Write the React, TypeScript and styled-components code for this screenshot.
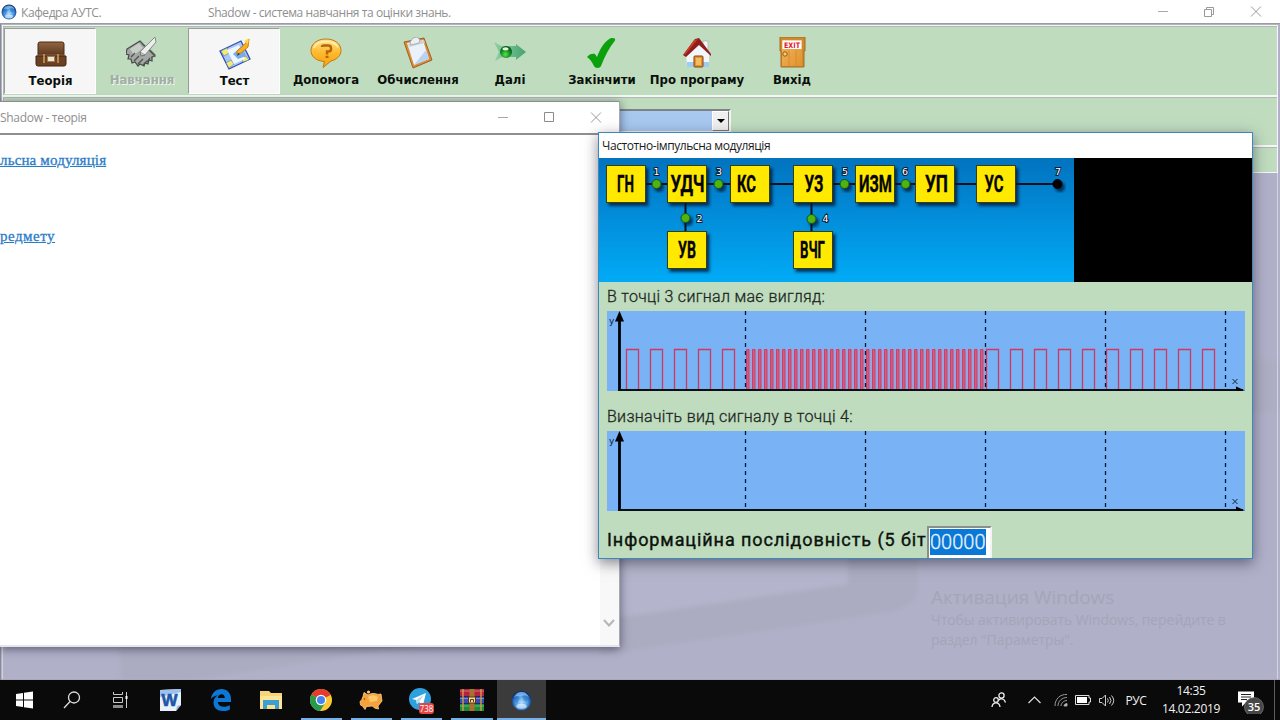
import React from 'react';
import styled, { createGlobalStyle, css } from 'styled-components';

const GREEN = '#bfdcbf';
const UI_FONT = '"Open Sans", "Noto Sans", sans-serif';

const GlobalStyle = createGlobalStyle`
  * { box-sizing: border-box; }
  body { margin: 0; background: #000; overflow: hidden; }
  svg { display: block; flex: none; }
`;

const Screen = styled.div`
  position: relative;
  display: flex;
  flex-direction: column;
  width: 1280px;
  height: 720px;
  overflow: hidden;
  font-family: ${UI_FONT};
`;

/* ---------- main window ---------- */

const TitleBar = styled.header`
  display: flex;
  align-items: center;
  flex: none;
  height: 24px;
  background: #fff;
  border-bottom: 1px solid #9c9c9c;
  color: #8f8f8f;
  font-size: 12px;
  line-height: 16px;
  letter-spacing: -0.42px;
  white-space: nowrap;
`;

const AppMark = styled.div`
  width: 21px;
  padding-left: 1px;
`;

const AppName = styled.span`
  width: 187px;
  padding-top: 2px;
`;

const AppCaption = styled.span`
  flex: 1;
  padding-top: 2px;
`;

const CaptionButtons = styled.div<{ $pad: number }>`
  display: flex;
  align-items: center;
  padding-right: ${(p) => p.$pad}px;
`;

const CaptionButton = styled.div`
  display: flex;
  justify-content: center;
  width: 46.5px;
`;

const Workspace = styled.main`
  position: relative;
  display: flex;
  flex-direction: column;
  flex: none;
  height: 657px;
  padding: 1px 2px 0 1px;
  background: #b0b0c9;
  border-left: 1px solid #8b8b93;
`;

const Backdrop = styled.svg`
  position: absolute;
  left: 0;
  top: 0;
`;

const Band = styled.div<{ $height: number }>`
  position: relative;
  display: flex;
  flex: none;
  height: ${(p) => p.$height}px;
  background: ${GREEN};
  border: 1px solid #f4f8f4;
  box-shadow: inset 0 1px 0 #b4b8b4, inset 1px 0 0 #b4b8b4, inset -1px 0 0 #cfd6cf;
`;

const ToolStrip = styled(Band)`
  padding: 2px 0 0 1px;
`;

const ToolButton = styled.div<{ $width: number; $pressed?: boolean; $disabled?: boolean }>`
  display: flex;
  flex-direction: column;
  align-items: center;
  flex: none;
  width: ${(p) => p.$width}px;
  height: 66px;
  padding-top: 9px;
  color: ${(p) => (p.$disabled ? '#a3aca5' : '#0a0f0a')};
  text-shadow: ${(p) => (p.$disabled ? '1px 1px 0 #eef5ee' : 'none')};
  font: bold 13px/16px 'DejaVu Sans Condensed', 'DejaVu Sans', sans-serif;
  white-space: nowrap;
  ${(p) =>
    p.$pressed &&
    css`
      background: #f6f6f6;
      border: 1px solid #fff;
      border-top-color: #9b9b9b;
      border-left-color: #9b9b9b;
      padding-left: 1px;
    `}
`;

const ToolIcon = styled.svg`
  width: 32px;
  height: 32px;
  margin-bottom: 3px;
`;

const SubjectBand = styled(Band)`
  padding-top: 12px;
`;

const Combo = styled.div`
  display: flex;
  justify-content: flex-end;
  width: 728px;
  height: 24px;
  background: #a8c8ef;
  border: 2px solid #7c8288;
  border-right-color: #f4f4f4;
  border-bottom-color: #f4f4f4;
`;

const ComboArrow = styled.div`
  display: flex;
  align-items: center;
  justify-content: center;
  width: 17px;
  background: #f0f0f0;
  border: 1px solid #fff;
  border-right-color: #77777b;
  border-bottom-color: #77777b;
`;

const Watermark = styled.div`
  position: absolute;
  left: 930px;
  top: 560px;
  color: #a4a5b7;
  font-size: 14px;
  line-height: 20px;
  letter-spacing: -0.08px;
  white-space: nowrap;
`;

const WatermarkTitle = styled.div`
  font-size: 19px;
  line-height: 26px;
`;

/* ---------- theory window ---------- */

const TheoryWindow = styled.section`
  position: absolute;
  left: 0;
  top: 101px;
  display: flex;
  flex-direction: column;
  width: 620px;
  height: 546px;
  background: #fff;
  border-top: 1px solid #8b8f8b;
  border-right: 1px solid #a9a9b2;
  border-bottom: 2px solid #e4e4ee;
  box-shadow: 0 2px 9px rgba(20, 20, 40, 0.55);
`;

const TheoryTitle = styled.div`
  display: flex;
  align-items: center;
  justify-content: space-between;
  height: 33px;
  border-bottom: 2px solid #8f8f8f;
  color: #8f8f8f;
  font-size: 12px;
  letter-spacing: -0.3px;
`;

const TheoryBody = styled.div`
  display: flex;
  flex: 1;
`;

const Links = styled.nav`
  display: flex;
  flex-direction: column;
  flex: 1;
  gap: 58px;
  padding-top: 16px;
`;

const TopicLink = styled.a<{ $spacing: number }>`
  color: #2a7cc9;
  font: 15px/18px 'Liberation Serif', serif;
  letter-spacing: ${(p) => p.$spacing}px;
  text-decoration: underline;
  -webkit-text-stroke: 0.3px #2a7cc9;
`;

const ScrollTrack = styled.div`
  display: flex;
  align-items: flex-end;
  justify-content: center;
  width: 19px;
  padding: 0 2px 17px 0;
  background: #f8f8f8;
`;

/* ---------- task window ---------- */

const TaskWindow = styled.section`
  position: absolute;
  left: 598px;
  top: 132px;
  display: flex;
  flex-direction: column;
  width: 655px;
  height: 427px;
  background: ${GREEN};
  border: 1px solid #3c88bd;
  box-shadow: 0 4px 13px rgba(20, 20, 40, 0.5);
`;

const TaskTitle = styled.div`
  flex: none;
  height: 25px;
  padding: 1px 0 0 3px;
  background: #fff;
  color: #1a1a1a;
  font-size: 12px;
  line-height: 24px;
  letter-spacing: -0.42px;
`;

const SchemeArea = styled.div`
  flex: none;
  height: 124px;
  background: #000;
`;

const Caption = styled.div`
  flex: none;
  height: 29px;
  padding-left: 8px;
  color: #1d261d;
  font: 300 16px/30px Roboto, sans-serif;
  letter-spacing: 0.3px;
  -webkit-text-stroke: 0.3px #1d261d;
`;

const ChartSlot = styled.div<{ $gap: number }>`
  flex: none;
  padding-left: 8px;
  margin-bottom: ${(p) => p.$gap}px;
`;

const AnswerRow = styled.div`
  display: flex;
  flex: 1;
  min-height: 0;
  padding-left: 8px;
  overflow: hidden;
`;

const AnswerLabel = styled.label`
  width: 320px;
  padding-top: 1px;
  color: #0b120b;
  font: 400 18px/26px Roboto, sans-serif;
  letter-spacing: 0.93px;
  white-space: nowrap;
  -webkit-text-stroke: 0.4px #0b120b;
`;

const AnswerField = styled.div`
  width: 65px;
  height: 34px;
  padding: 1px 0 0 1px;
  background: #fff;
  border: 2px solid #8a8f8a;
  border-right-color: #f4f4f4;
  border-bottom-color: #f4f4f4;
`;

const Selection = styled.span`
  display: block;
  width: 56px;
  height: 26px;
  background: #0a78d6;
  color: #e8f4ff;
  font: 300 20px/26px Roboto, sans-serif;
  -webkit-text-stroke: 0.3px #e8f4ff;
`;

/* ---------- taskbar ---------- */

const Taskbar = styled.footer`
  display: flex;
  flex: none;
  height: 40px;
  margin-top: -1px;
  position: relative;
  background: #0a0a0a;
  color: #f2f2f2;
  font-size: 12px;
`;

const TaskItem = styled.div<{ $width: number; $running?: boolean; $active?: boolean }>`
  position: relative;
  display: flex;
  align-items: center;
  justify-content: center;
  flex: none;
  width: ${(p) => p.$width}px;
  background: ${(p) => (p.$active ? '#3b3b3b' : 'transparent')};
  &::after {
    content: '';
    display: ${(p) => (p.$running ? 'block' : 'none')};
    position: absolute;
    left: ${(p) => (p.$active ? 0 : 5)}px;
    right: ${(p) => (p.$active ? 0 : 4)}px;
    bottom: 0;
    height: 2px;
    background: #76b2e8;
  }
`;

const Spacer = styled.div`
  flex: 1;
`;

const Tray = styled.div`
  display: flex;
  align-items: center;
  width: 296px;
`;

const TrayCell = styled.div<{ $width: number }>`
  display: flex;
  justify-content: center;
  flex: none;
  width: ${(p) => p.$width}px;
  letter-spacing: -0.4px;
`;

const Clock = styled.div`
  display: flex;
  flex-direction: column;
  align-items: center;
  flex: none;
  width: 64px;
  margin-right: 14px;
  line-height: 18px;
  letter-spacing: -0.3px;
`;

const ShowDesktop = styled.div`
  align-self: stretch;
  width: 1px;
  margin-left: auto;
  margin-right: 5px;
  background: #5c5c5c;
`;

/* ---------- shared drawings ---------- */

const MinimizeIcon = () => (
  <svg width="12" height="12" viewBox="0 0 12 12" stroke="#a8a8a8" fill="none"><path d="M1 5.500h10" /></svg>
);
const RestoreIcon = () => (
  <svg width="12" height="12" viewBox="0 0 12 12" stroke="#999" fill="none"><path d="M1.500 3.500h7v7h-7zM3.500 3.500v-2h7v7h-2" /></svg>
);
const MaximizeIcon = () => (
  <svg width="12" height="12" viewBox="0 0 12 12" stroke="#8c8c8c" fill="none"><path d="M1.500 .5h9v9h-9z" /></svg>
);
const CloseIcon = () => (
  <svg width="12" height="12" viewBox="0 0 12 12" stroke="#999" fill="none"><path d="M1 .5l10 10M11 .5L1 10.500" /></svg>
);

const Globe = ({ size }: { size: number }) => (
  <svg width={size} height={size} viewBox="0 0 20 20">
    <defs>
      <radialGradient id="globe" cx="50%" cy="60%" r="55%">
        <stop offset="0" stopColor="#b4defc" />
        <stop offset="0.5" stopColor="#5aa5e6" />
        <stop offset="0.8" stopColor="#2263b8" />
        <stop offset="1" stopColor="#0c2f6c" />
      </radialGradient>
    </defs>
    <circle cx="10" cy="10" r="9.300" fill="url(#globe)" />
    <path d="M3 7c2-4 4-5 7-5s5 1 7 5c-3-2-4-2-7-1s-4-1-7 1z" fill="#9bd2ff" opacity="0.65" />
    <path d="M5 6c2 0 4 1 3 3s-2 2-2 4c-2-1-3-4-1-7zM11 5l5 3-1 3-3-1z" fill="#2668bb" opacity="0.45" />
    <ellipse cx="10" cy="15.500" rx="5" ry="2.400" fill="#fff" opacity="0.55" />
  </svg>
);

const BriefcaseIcon = () => (
  <ToolIcon viewBox="0 0 32 32">
    <defs>
      <linearGradient id="leather" x1="0" y1="0" x2="0" y2="1">
        <stop offset="0" stopColor="#936642" /><stop offset="1" stopColor="#59341c" />
      </linearGradient>
    </defs>
    <path d="M3 6q0-2 2-2h22q2 0 2 2v12H3z" fill="url(#leather)" stroke="#4b2b15" />
    <path d="M1 18h30v8q0 2-2 2H3q-2 0-2-2z" fill="#6c4122" stroke="#43240f" />
    <path d="M3 17h26" stroke="#8f6340" />
    <path d="M9 16v9M23 16v9" stroke="#c79a5c" strokeWidth="1.600" />
    <rect x="12.500" y="18.500" width="7" height="5" fill="#eee4d2" stroke="#a57c50" />
  </ToolIcon>
);

const NotebookIcon = () => (
  <ToolIcon viewBox="0 0 32 32">
    <path d="M1 12L14 4l15 15-3 1 0 4-3-1-1 4-3-1-1 3-4-2-2 2-3-4-3 1-1-4-3 0 1-4-3-1z" fill="#a3a8a4" stroke="#454b47" strokeWidth="1.200" />
    <path d="M4 12l9-6 4 5-9 7z" fill="#c9cdca" />
    <path d="M5 20l4-4M8 24l5-5M12 27l5-5M17 28l4-4M21 25l3-4" stroke="#4d534f" strokeWidth="1.300" />
    <path d="M14 15L25 4l4-4 1 5-11 13z" fill="#eceeec" stroke="#858a86" />
    <path d="M14 15l1 4 4-1" fill="#bfc3c0" stroke="#5d625e" strokeWidth=".8" />
    <path d="M15 5l3 4M24 13l5 5-4 3" fill="none" stroke="#59605b" strokeWidth="1.200" />
  </ToolIcon>
);

const TestIcon = () => (
  <ToolIcon viewBox="0 0 32 32">
    <path d="M1 13L22 3l9 18-21 10z" fill="#a9c6f5" stroke="#304fae" strokeWidth="1.300" />
    <path d="M2 13l6-3 2 5-5 3zM22 20l5-2 3 4-6 2zM7 25l5-3 3 4-5 4z" fill="#f4ec6b" stroke="#5378cf" strokeWidth=".6" />
    <path d="M8 12l12-5 6 14-11 5z" fill="#eef6ff" />
    <path d="M14 16l9-8 4 10-8 3z" fill="#79abe8" />
    <path d="M18 13l6-5 6-7-1 8-7 6-4 1z" fill="#f5b024" stroke="#d0820b" />
    <path d="M25 3l5-3-1 6z" fill="#ffd84d" />
    <path d="M18 18l1-3 2 1z" fill="#25335f" />
  </ToolIcon>
);

const HelpIcon = () => (
  <ToolIcon viewBox="0 0 32 32">
    <defs>
      <linearGradient id="bubble" x1="0" y1="0" x2="0" y2="1">
        <stop offset="0" stopColor="#ffe28a" /><stop offset="0.5" stopColor="#ffb92a" /><stop offset="1" stopColor="#f7a010" />
      </linearGradient>
    </defs>
    <path d="M16 2c9 0 15 5 15 11.500 0 5-4 9-10 10.500l-8 6.500 1.500-6C6 24 1 19.500 1 13.500 1 7 7 2 16 2z" fill="url(#bubble)" stroke="#c07a10" />
    <path d="M4 11c2-5 7-6.500 12-6.500s10 2 12 6" fill="none" stroke="#fff0b8" strokeWidth="1.300" />
    <path d="M12 10q0-1.500 2-1.500h4q3 0 3 2.500v1.500q0 2-3 2h-1v3" fill="none" stroke="#b5650b" strokeWidth="2.400" />
    <rect x="15.500" y="18.800" width="3" height="2.200" fill="#b5650b" />
  </ToolIcon>
);

const ClipboardIcon = () => (
  <ToolIcon viewBox="0 0 32 32">
    <path d="M2 5L22 1l8 22-19 8z" fill="#d88b3c" stroke="#a45f1d" />
    <path d="M5 6l16-3 6 19-15 6z" fill="#e9f1fb" />
    <path d="M12 28L27 22l-3-9z" fill="#b9d2f0" />
    <path d="M6 7l16-4 1 3L7 10z" fill="#cdd3d8" />
    <path d="M8 5l3-4 4-1 3 3-1 3-8 2z" fill="#edf0f2" stroke="#9aa2a9" strokeWidth=".8" />
  </ToolIcon>
);

const NextIcon = () => (
  <ToolIcon viewBox="0 0 32 32">
    <defs>
      <radialGradient id="orb" cx="45%" cy="70%" r="60%">
        <stop offset="0" stopColor="#5fe05a" /><stop offset="0.6" stopColor="#15951d" /><stop offset="1" stopColor="#08591a" />
      </radialGradient>
      <linearGradient id="arrow" x1="0" x2="1">
        <stop offset="0" stopColor="#8fd0a6" /><stop offset="1" stopColor="#45a470" />
      </linearGradient>
    </defs>
    <path d="M0 5l7 4h15V7l10 8-10 8v-3H8l-7 4 4-9z" fill="url(#arrow)" />
    <circle cx="12" cy="15" r="6" fill="url(#orb)" />
    <ellipse cx="11.500" cy="11.800" rx="3" ry="1.600" fill="#dffbd9" />
  </ToolIcon>
);

const DoneIcon = () => (
  <ToolIcon viewBox="0 0 32 32">
    <path d="M1 20c2-3 6-4 8-3l2 3C14 12 18 5 24 1.500c3-1 6-.5 5 2C23 11 19 19 15 29c-1 2.500-6 2.500-7 0-2-4-4-7-7-9z" fill="#0ba10d" />
  </ToolIcon>
);

const HomeIcon = () => (
  <ToolIcon viewBox="0 0 32 32">
    <path d="M22 4h5v10h-5z" fill="#f2f4f8" stroke="#9da5b5" strokeWidth=".6" />
    <path d="M5 15L18 6l10 10v14H6z" fill="#f3f7fc" />
    <path d="M6 25h22v5H6z" fill="#9fcdf0" />
    <path d="M2 18L14 2l4-1 12 16v2L18 8 5 20z" fill="#8f1f19" />
    <path d="M3 17L13 3l4-1-13 16z" fill="#c93a2d" />
    <rect x="13" y="19" width="9" height="11" rx="1" fill="#e39332" stroke="#7d4512" />
    <rect x="15" y="21" width="5" height="7" fill="#f6bb62" />
  </ToolIcon>
);

const ExitIcon = () => (
  <ToolIcon viewBox="0 0 32 32">
    <defs>
      <linearGradient id="door" x1="0" y1="0" x2="1" y2="1">
        <stop offset="0" stopColor="#f3b65c" /><stop offset="1" stopColor="#e0922f" />
      </linearGradient>
    </defs>
    <path d="M4 0h25v14h-1v16H5V14H4z" fill="#d08a2e" stroke="#a86a1b" />
    <rect x="6" y="3" width="20" height="26" fill="url(#door)" />
    <path d="M13 13v16M20 13v16" stroke="#d48c35" />
    <rect x="6.500" y="3.500" width="19" height="8.500" fill="#fff" />
    <text x="16" y="10.700" textAnchor="middle" fontFamily="DejaVu Sans, sans-serif" fontWeight="bold" fontSize="7.500" textLength="16" lengthAdjust="spacingAndGlyphs" fill="#df1730">EXIT</text>
    <circle cx="9" cy="17" r="2.200" fill="#f7cb78" stroke="#95570f" />
  </ToolIcon>
);

/* ---------- scheme ---------- */

type Node = { x: number; y: number; label: string; tx: number; tw: number };

const NARROW = 0.6;

const nodes: Node[] = [
  { x: 7, y: 7, label: 'ГН', tx: 18, tw: 17 },
  { x: 68, y: 7, label: 'УДЧ', tx: 71.5, tw: 34 },
  { x: 131, y: 7, label: 'КС', tx: 138, tw: 19 },
  { x: 194, y: 7, label: 'УЗ', tx: 205.5, tw: 19 },
  { x: 256, y: 7, label: 'ИЗМ', tx: 260, tw: 33 },
  { x: 316, y: 7, label: 'УП', tx: 326, tw: 23 },
  { x: 377, y: 7, label: 'УС', tx: 385.5, tw: 19 },
  { x: 68, y: 73, label: 'УВ', tx: 79, tw: 18 },
  { x: 194, y: 73, label: 'ВЧГ', tx: 201, tw: 25 },
];

const points = [
  { n: 1, x: 57.5, y: 26, lx: 57.5, ly: 16.5 },
  { n: 2, x: 86.5, y: 60, lx: 100.5, ly: 63.5 },
  { n: 3, x: 119.5, y: 26, lx: 120, ly: 16.5 },
  { n: 4, x: 212.5, y: 61, lx: 226.5, ly: 63.5 },
  { n: 5, x: 245.5, y: 26, lx: 246, ly: 16.5 },
  { n: 6, x: 306.5, y: 26, lx: 306, ly: 16.5 },
  { n: 7, x: 458.5, y: 26, lx: 459, ly: 16.5 },
];

const Scheme = () => (
  <svg width="475" height="124" viewBox="0 0 475 124">
    <defs>
      <linearGradient id="sky" x1="0" y1="0" x2="0" y2="1">
        <stop offset="0" stopColor="#0273bf" />
        <stop offset="0.5" stopColor="#028edb" />
        <stop offset="1" stopColor="#01abf6" />
      </linearGradient>
      <filter id="drop" x="-30%" y="-30%" width="170%" height="170%">
        <feDropShadow dx="2.500" dy="3" stdDeviation="1.800" floodColor="#001c3a" floodOpacity="0.8" />
      </filter>
    </defs>
    <rect width="475" height="124" fill="url(#sky)" />
    <path d="M27 26H458M86.500 26V92M212.500 26V92" stroke="#04101c" strokeWidth="2" fill="none" />
    {points.map((p) => (
      <g key={p.n}>
        <circle cx={p.x} cy={p.y} r="4.500" fill={p.n === 7 ? '#000' : '#4fb50e'} stroke={p.n === 7 ? '#000' : '#14501a'} filter="url(#drop)" />
        <text x={p.lx} y={p.ly} textAnchor="middle" fontFamily="DejaVu Sans, sans-serif" fontSize="9.500" fill="#fff" stroke="#0b1f33" strokeWidth="2" paintOrder="stroke">{p.n}</text>
      </g>
    ))}
    {nodes.map((n) => (
      <g key={n.label}>
        <rect x={n.x + 0.5} y={n.y + 0.5} width="39" height="37" fill="#ffe900" stroke="#3a3c08" filter="url(#drop)" />
        <text
          transform={`translate(${n.tx} ${n.y + 27.2}) scale(${NARROW} 1)`}
          fontFamily="Roboto, sans-serif"
          fontWeight="bold"
          fontSize="24"
          textLength={n.tw / NARROW}
          lengthAdjust="spacingAndGlyphs"
          fill="#050500"
          stroke="#050500"
          strokeWidth="0.4"
        >
          {n.label}
        </text>
      </g>
    ))}
  </svg>
);

/* ---------- charts ---------- */

const slow = (start: number) => Array.from({ length: 5 }, (_, i) => ({ x: start + i * 24, w: 12 }));
const fast = (start: number) => Array.from({ length: 20 }, (_, i) => ({ x: start + i * 6, w: 2.5 }));
const pulses = [...slow(19.5), ...fast(139.5), ...fast(259.5), ...slow(379.5), ...slow(499.5)];

const Chart = ({ signal = false }: { signal?: boolean }) => (
  <svg width="638" height="80" viewBox="0 0 638 80">
    <rect width="638" height="80" fill="#7ab2f6" />
    {signal && <rect x="139" y="38" width="240" height="40" fill="#a59fd4" opacity="0.6" />}
    {signal && pulses.map((p) => (
      <path
        key={p.x}
        d={`M${p.x} 78V38.500h${p.w}V78`}
        fill={p.w < 12 ? '#dc4a6c' : 'none'}
        fillOpacity="0.8"
        stroke="#cf3960"
        strokeWidth={p.w < 12 ? 0.9 : 1.3}
      />
    ))}
    {[138.5, 258.5, 378.5, 498.5, 618.5].map((x) => (
      <path key={x} d={`M${x} 0V78`} stroke="#061a33" strokeWidth="1.300" strokeDasharray="4 4" />
    ))}
    <path d="M12.500 4V80" stroke="#000" strokeWidth="2.800" />
    <path d="M12.500 0l4.500 10.500h-9z" />
    <path d="M11.500 79H636" stroke="#0a0f14" strokeWidth="2" />
    <path d="M629 75.500l9 4h-9z" />
    <text x="2" y="13" fontFamily="DejaVu Sans, sans-serif" fontSize="9" fill="#0a1a30">y</text>
    <path d="M625.500 68l5 5M630.500 68l-5 5" stroke="#0a2a3a" strokeWidth="1" />
  </svg>
);

/* ---------- taskbar drawings ---------- */

const StartIcon = () => (
  <svg width="17" height="18" viewBox="0 0 17 18" fill="#fff"><path d="M0 3l7-1v6.500H0zM8 1.800L17 .5v8H8zM0 9.500h7V16l-7-1zM8 9.500h9v8l-9-1.300z" /></svg>
);
const SearchIcon = () => (
  <svg width="18" height="18" viewBox="0 0 18 18" fill="none" stroke="#ddd" strokeWidth="1.300"><circle cx="11" cy="6.500" r="5.500" /><path d="M7 10.500L1 17" /></svg>
);
const TaskViewIcon = () => (
  <svg width="17" height="16" viewBox="0 0 17 16" fill="none" stroke="#ccc">
    <path d="M1.500 0v2.500h9V0M1.500 5.500h9v5h-9zM14.500 0v16" />
    <path d="M1 13h10v3H1z" fill="#8a8a8a" stroke="none" />
    <path d="M13.500 4h2v3h-2z" fill="#fff" stroke="none" />
  </svg>
);
const WordIcon = () => (
  <svg width="23" height="24" viewBox="0 0 23 24">
    <path d="M1 2l21-1v16l-5 6H1z" fill="#e9f0fa" /><path d="M1 2l21-1v3L1 9z" fill="#9dc0ec" />
    <path d="M17 23l1-5 4-1z" fill="#9bb5dc" />
    <text x="10.500" y="18" textAnchor="middle" fontFamily="Liberation Sans, sans-serif" fontWeight="bold" fontSize="17" fill="#1c56a8" stroke="#1c56a8" strokeWidth=".6">W</text>
  </svg>
);
const EdgeIcon = () => (
  <svg width="20" height="22" viewBox="0 0 20 22">
    <path d="M0 10C.5 4 5 0 10.500 0 16 0 20 4 20 10v3H6.800c.4 3.500 3.400 4.800 6.400 4.800 2.200 0 4-.6 5.600-1.500v4.200C17 21.500 14.700 22 12.200 22 6 22 2.500 18.500 2.500 13.500c0-3 1.500-5.500 4.300-7.200C3.800 6.600 1.500 7.800 0 10zM6.800 9h7c0-2.500-1.200-3.800-3.200-3.800S7.100 6.700 6.800 9z" fill="#0c78d6" />
  </svg>
);
const ExplorerIcon = () => (
  <svg width="22" height="20" viewBox="0 0 22 20">
    <path d="M0 1h9l2 2h11v16H0z" fill="#f6d57a" /><path d="M0 6h22v13H0z" fill="#fde597" />
    <path d="M3 19v-9h16v9h-4v-4H7v4z" fill="#3c9fd0" /><path d="M7 15h8v4H7z" fill="#fbe08c" />
  </svg>
);
const ChromeIcon = () => (
  <svg width="22" height="22" viewBox="0 0 22 22">
    <circle cx="11" cy="11" r="11" fill="#fcc934" />
    <path d="M11 11L1.500 5.500A11 11 0 0 1 20.500 5.500L20.500 6z" fill="#e33b2e" />
    <path d="M1.500 5.500A11 11 0 0 0 10 22l5.500-8.500L11 11z" fill="#279a4b" />
    <circle cx="11" cy="11" r="5.300" fill="#fff" /><circle cx="11" cy="11" r="4" fill="#4583ee" />
  </svg>
);
const PigIcon = () => (
  <svg width="24" height="22" viewBox="0 0 24 22">
    <path d="M1 12.500c2-1 2-3 3-5l1-4 4 2.500c3-2 7-2 10-.5l3-.5 1 7-4 5 .5 3-4-1-2-2-6 .5-1.500 3-2.500-3.500-2-1z" fill="#f6a23a" stroke="#ffd08a" strokeWidth=".8" />
    <path d="M9 8c3-2.500 7-2 10 0l-1 4-7 1z" fill="#ffc76b" />
    <circle cx="9.500" cy="3" r="1.600" fill="#f9c98e" />
    <circle cx="5.500" cy="10" r=".8" fill="#7a4309" />
  </svg>
);
const TelegramIcon = () => (
  <svg width="26" height="28" viewBox="0 0 26 28">
    <circle cx="12" cy="13" r="11" fill="#2da1de" />
    <path d="M4 13l14-6-3 12-4-3-2 2-1-4z" fill="#fff" /><path d="M8 14l8-5-5 7-2 2z" fill="#b9d9ec" />
    <rect x="11" y="17" width="15" height="11" rx="3" fill="#e64444" />
    <text x="18.500" y="26" textAnchor="middle" fontFamily="Open Sans, sans-serif" fontSize="9" textLength="13.500" lengthAdjust="spacingAndGlyphs" fill="#fff">738</text>
  </svg>
);
const WinrarIcon = () => (
  <svg width="24" height="22" viewBox="0 0 24 22">
    <rect width="24" height="7" y="0" fill="#b3243c" /><rect width="24" height="7" y="7.500" fill="#3c49b0" /><rect width="24" height="7" y="15" fill="#1d8a3c" />
    <path d="M0 2h24M0 9.500h24M0 17h24" stroke="#fff" opacity="0.35" />
    <path d="M3 0v22M21 0v22" stroke="#d9a441" strokeWidth="1.300" />
    <rect x="9.500" width="5" height="22" fill="#a9712d" /><rect x="8.500" y="8" width="7" height="6" fill="#f0d9a0" stroke="#5b3710" /><path d="M10.500 13v-2.500h3V13" fill="none" stroke="#5b3710" />
  </svg>
);
const PeopleIcon = () => (
  <svg width="16" height="16" viewBox="0 0 16 16" fill="none" stroke="#eee" strokeWidth="1.300"><circle cx="10.500" cy="3.500" r="2.600" /><path d="M7.500 8.500c2-3 6-2 7 2" /><circle cx="5" cy="8" r="2.300" /><path d="M1 15c.5-5.500 7.500-5.500 8 0" /></svg>
);
const ChevronUp = () => (
  <svg width="13" height="8" viewBox="0 0 13 8" fill="none" stroke="#ddd" strokeWidth="1.200"><path d="M.5 7l6-6 6 6" /></svg>
);
const WifiIcon = () => (
  <svg width="14" height="14" viewBox="0 0 14 14" fill="none" stroke="#999"><path d="M1 13C1 6 6 1 13 1.500M4 13c0-5 4-8.500 9-8.500M7 13c0-3 3-5.500 6-5.500" /><path d="M10 13c0-1.500 1.500-2.500 3-2.500V13z" fill="#ddd" /></svg>
);
const BatteryIcon = () => (
  <svg width="16" height="10" viewBox="0 0 16 10"><path d="M.5 .5h13.500v2.500h1.500v4H14v2.500H.5z" fill="none" stroke="#ddd" /><rect x="2" y="2" width="10" height="6" fill="#fff" /></svg>
);
const VolumeIcon = () => (
  <svg width="16" height="13" viewBox="0 0 16 13" fill="none" stroke="#ccc"><path d="M.5 4.500h2.500l3.500-3.500v11L3 8.500H.5zM8.500 4.500q1.500 2 0 4M10.500 3q3 3.500 0 7M12.500 1.500q4.500 5 0 10" /></svg>
);
const NotifyIcon = () => (
  <svg width="28" height="28" viewBox="0 0 28 28">
    <path d="M1 5.500h16v11H9l-4 4v-4H1z" fill="#fff" /><path d="M4 8.500h10M4 11h10M4 13.500h6" stroke="#222" />
    <circle cx="17" cy="21" r="9.500" fill="#484848" stroke="#8a8a8a" strokeWidth="0.600" />
    <text x="17" y="25" textAnchor="middle" fontFamily="Open Sans, sans-serif" fontWeight="600" fontSize="11" fill="#fff">35</text>
  </svg>
);

const tools = [
  { label: 'Теорія', icon: <BriefcaseIcon />, width: 92, pressed: true },
  { label: 'Навчання', icon: <NotebookIcon />, width: 92, disabled: true },
  { label: 'Тест', icon: <TestIcon />, width: 92, pressed: true },
  { label: 'Допомога', icon: <HelpIcon />, width: 92 },
  { label: 'Обчислення', icon: <ClipboardIcon />, width: 92 },
  { label: 'Далі', icon: <NextIcon />, width: 92 },
  { label: 'Закінчити', icon: <DoneIcon />, width: 92 },
  { label: 'Про програму', icon: <HomeIcon />, width: 98 },
  { label: 'Вихід', icon: <ExitIcon />, width: 92 },
];

const launchers = [
  { id: 'start', icon: <StartIcon />, width: 48 },
  { id: 'search', icon: <SearchIcon />, width: 48 },
  { id: 'view', icon: <TaskViewIcon />, width: 49 },
  { id: 'word', icon: <WordIcon />, width: 51 },
  { id: 'edge', icon: <EdgeIcon />, width: 50 },
  { id: 'files', icon: <ExplorerIcon />, width: 50 },
  { id: 'chrome', icon: <ChromeIcon />, width: 50, running: true },
  { id: 'pig', icon: <PigIcon />, width: 50, running: true },
  { id: 'telegram', icon: <TelegramIcon />, width: 50, running: true },
  { id: 'winrar', icon: <WinrarIcon />, width: 51, running: true },
  { id: 'shadow', icon: <Globe size={21} />, width: 49, running: true, active: true },
];

export default function App() {
  return (
    <Screen>
      <GlobalStyle />
      <TitleBar>
        <AppMark><Globe size={16} /></AppMark>
        <AppName>Кафедра АУТС.</AppName>
        <AppCaption>Shadow - система навчання та оцінки знань.</AppCaption>
        <CaptionButtons $pad={1}>
          <CaptionButton><MinimizeIcon /></CaptionButton>
          <CaptionButton><RestoreIcon /></CaptionButton>
          <CaptionButton><CloseIcon /></CaptionButton>
        </CaptionButtons>
      </TitleBar>

      <Workspace>
        <Backdrop width="1279" height="656" viewBox="1 24 1279 656">
          <defs><filter id="soft"><feGaussianBlur stdDeviation="2" /></filter></defs>
          <g filter="url(#soft)">
            <path d="M118 640h340L232 674q-95 14-110 8z" fill="#abacc1" />
            <path d="M600 360h690v52H600z" fill="#adadc3" />
            <path d="M600 540h318v52q-4 17-40 22L600 655z" fill="#abacc1" />
            <path d="M600 540h248v44L600 620z" fill="#b4b5cc" />
          </g>
          <path d="M2.500 172V679M1277.500 172V679" stroke="#d2d2e0" />
          <path d="M1 679.500H1280" stroke="#a9a9b6" />
        </Backdrop>
        <ToolStrip $height={71}>
          {tools.map((t) => (
            <ToolButton key={t.label} $width={t.width} $pressed={t.pressed} $disabled={t.disabled}>
              {t.icon}
              {t.label}
            </ToolButton>
          ))}
        </ToolStrip>
        <SubjectBand $height={50}>
          <Combo><ComboArrow><svg width="8" height="4" viewBox="0 0 8 4"><path d="M0 0h8L4 4z" /></svg></ComboArrow></Combo>
        </SubjectBand>
        <Band $height={27} />
        <Watermark>
          <WatermarkTitle>Активация Windows</WatermarkTitle>
          Чтобы активировать Windows, перейдите в<br />раздел "Параметры".
        </Watermark>
      </Workspace>

      <TheoryWindow>
        <TheoryTitle>
          <span>Shadow - теорія</span>
          <CaptionButtons $pad={0}>
            <CaptionButton><MinimizeIcon /></CaptionButton>
            <CaptionButton><MaximizeIcon /></CaptionButton>
            <CaptionButton><CloseIcon /></CaptionButton>
          </CaptionButtons>
        </TheoryTitle>
        <TheoryBody>
          <Links>
            <TopicLink $spacing={0.15}>льсна модуляція</TopicLink>
            <TopicLink $spacing={0.5}>редмету</TopicLink>
          </Links>
          <ScrollTrack>
            <svg width="12" height="10" viewBox="0 0 12 10" fill="none" stroke="#b5b5b5" strokeWidth="2"><path d="M1 2l5 5.500L11 2" /></svg>
          </ScrollTrack>
        </TheoryBody>
      </TheoryWindow>

      <TaskWindow>
        <TaskTitle>Частотно-імпульсна модуляція</TaskTitle>
        <SchemeArea><Scheme /></SchemeArea>
        <Caption>В точці 3 сигнал має вигляд:</Caption>
        <ChartSlot $gap={11}><Chart signal /></ChartSlot>
        <Caption>Визначіть вид сигналу в точці 4:</Caption>
        <ChartSlot $gap={15}><Chart /></ChartSlot>
        <AnswerRow>
          <AnswerLabel>Інформаційна послідовність (5 біт</AnswerLabel>
          <AnswerField><Selection>00000</Selection></AnswerField>
        </AnswerRow>
      </TaskWindow>

      <Taskbar>
        {launchers.map((l) => (
          <TaskItem key={l.id} $width={l.width} $running={l.running} $active={l.active}>{l.icon}</TaskItem>
        ))}
        <Spacer />
        <Tray>
          <TrayCell $width={30}><PeopleIcon /></TrayCell>
          <TrayCell $width={41}><ChevronUp /></TrayCell>
          <TrayCell $width={11}><WifiIcon /></TrayCell>
          <TrayCell $width={34}><BatteryIcon /></TrayCell>
          <TrayCell $width={13}><VolumeIcon /></TrayCell>
          <TrayCell $width={46}>РУС</TrayCell>
          <Clock><span>14:35</span><span>14.02.2019</span></Clock>
          <NotifyIcon />
          <ShowDesktop />
        </Tray>
      </Taskbar>
    </Screen>
  );
}
